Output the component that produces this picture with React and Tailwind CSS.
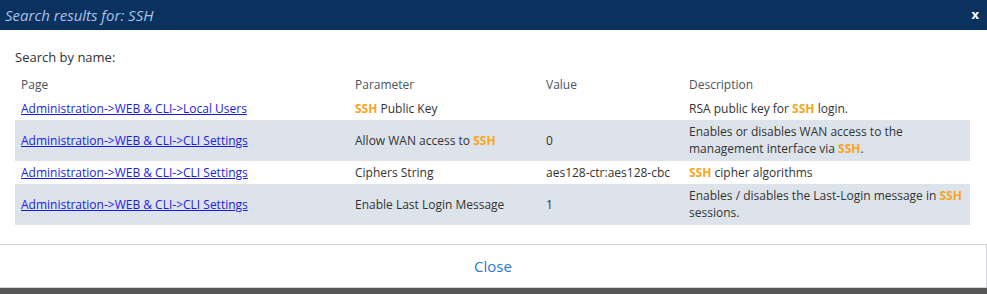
import React from 'react';

const rows = [
  {
    page: 'Administration->WEB & CLI->Local Users',
    param: [['SSH', true], [' Public Key', false]],
    value: '',
    desc: [['RSA public key for ', false], ['SSH', true], [' login.', false]],
  },
  {
    page: 'Administration->WEB & CLI->CLI Settings',
    param: [['Allow WAN access to ', false], ['SSH', true]],
    value: '0',
    desc: [['Enables or disables WAN access to the management interface via ', false], ['SSH', true], ['.', false]],
  },
  {
    page: 'Administration->WEB & CLI->CLI Settings',
    param: [['Ciphers String', false]],
    value: 'aes128-ctr:aes128-cbc',
    desc: [['SSH', true], [' cipher algorithms', false]],
  },
  {
    page: 'Administration->WEB & CLI->CLI Settings',
    param: [['Enable Last Login Message', false]],
    value: '1',
    desc: [['Enables / disables the Last-Login message in ', false], ['SSH', true], [' sessions.', false]],
  },
];

// highlight the matched search term
const Parts = ({ parts }) =>
  parts.map(([text, hit], i) =>
    hit ? (
      <span key={i} className="font-bold text-[#f7a51c]">{text}</span>
    ) : (
      <span key={i}>{text}</span>
    )
  );

const cols = 'grid grid-cols-[334px_191px_143px_1fr]';

const App = () => {
  return (
    <div className="w-[987px] h-[294px] bg-[#555] overflow-hidden" style={{ fontFamily: '"Open Sans", sans-serif' }}>
      <div className="bg-white">
        {/* Title bar */}
        <div className="h-[30px] bg-[#0b315e] flex items-center justify-between pl-[5px] pr-[8px]">
          <span className="italic text-[15px] text-[#a7c3e8]">Search results for: SSH</span>
          <span className="text-white font-bold text-[13px]">x</span>
        </div>

        {/* Body */}
        <div className="px-[15px] pt-[19px] pb-[19px] text-[12px] leading-[17px] text-[#333]">
          <div className="text-[13px] text-[#333] mb-[8px]">Search by name:</div>
          <div className="w-[955px]">
            <div className={`${cols} text-[#4a5460] pt-[2px] pb-[4px]`}>
              <div className="px-[6px]">Page</div>
              <div className="px-[6px]">Parameter</div>
              <div className="px-[6px]">Value</div>
              <div className="px-[6px]">Description</div>
            </div>
            {rows.map((r, i) => (
              <div
                key={i}
                className={`${cols} ${i % 2 === 1 ? 'bg-[#dde3ea] pt-[3px] pb-[4px]' : 'bg-white py-[3px]'}`}
              >
                <div className="px-[6px] self-center">
                  <a href="#" className="text-[#1c1ce0] underline">{r.page}</a>
                </div>
                <div className="px-[6px] self-center"><Parts parts={r.param} /></div>
                <div className="px-[6px] self-center">{r.value}</div>
                <div className="px-[6px] pr-[4px]"><Parts parts={r.desc} /></div>
              </div>
            ))}
          </div>
        </div>

        {/* Footer */}
        <div className="h-[44px] border-t border-r border-b border-[#d4d4da] flex items-center justify-center">
          <button className="text-[15px] text-[#2b78d4]">Close</button>
        </div>
      </div>
    </div>
  );
};

export default App;
